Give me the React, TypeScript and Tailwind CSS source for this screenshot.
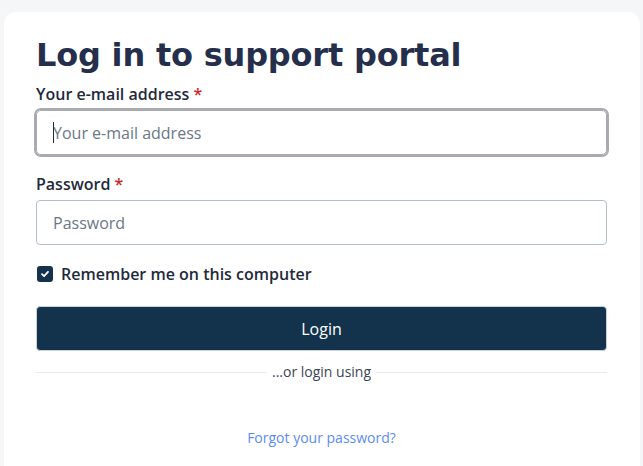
import React from "react";

export default function App() {
  return (
    <div className="min-h-[466px] w-full bg-[#f5f6f8] pt-[12px] font-['Open_Sans',sans-serif]">
      <div className="ml-[4px] w-[636px] min-h-[454px] rounded-t-[12px] bg-white pl-[32px] pr-[33px] pt-[23px]">
        <h1 className="font-['DejaVu_Sans',sans-serif] text-[32px] font-bold leading-[40px] tracking-[-0.2px] text-[#252f4c]">
          Log in to support portal
        </h1>

        <label className="mt-[7px] block text-[16px] font-semibold leading-[24px] text-[#1f2a3c]">
          Your e-mail address <span className="text-[#c62828]">*</span>
        </label>
        <div className="relative mt-[4px]">
          <input
            type="email"
            placeholder="Your e-mail address"
            className="block h-[45px] w-full rounded-[5px] border border-[#a9abb0] px-[16px] text-[16px] text-[#1f2a3c] placeholder:text-[#6b7785] outline-none ring-2 ring-[#a9abb0]"
          />
          <span className="pointer-events-none absolute left-[17px] top-[12px] h-[21px] w-px bg-[#1f2a3c]" />
        </div>

        <label className="mt-[17px] block text-[16px] font-semibold leading-[24px] text-[#1f2a3c]">
          Password <span className="text-[#c62828]">*</span>
        </label>
        <input
          type="password"
          placeholder="Password"
          className="mt-[4px] block h-[45px] w-full rounded-[4px] border border-[#b4bfca] px-[16px] text-[16px] text-[#1f2a3c] placeholder:text-[#6b7785] outline-none"
        />

        <div className="mt-[17px] flex h-[24px] items-center">
          <span className="ml-[1px] flex h-[16px] w-[16px] items-center justify-center rounded-[3px] bg-[#14324b]">
            <svg width="10" height="10" viewBox="0 0 10 10" fill="none">
              <path d="M2 5.2 L4.1 7.2 L8 2.9" stroke="white" strokeWidth="1.8" strokeLinecap="round" strokeLinejoin="round" />
            </svg>
          </span>
          <span className="ml-[8px] text-[16px] font-semibold leading-[24px] text-[#1f2a3c]">
            Remember me on this computer
          </span>
        </div>

        <button className="mt-[20px] flex h-[45px] w-full items-center justify-center rounded-[4px] border border-[#c9d2db] bg-[#13334c] text-[16px] text-white">
          Login
        </button>

        <div className="mt-[11px] flex h-[20px] items-center">
          <div className="h-px flex-1 bg-[#e8eaed]" />
          <span className="px-[5px] text-[14px] leading-[20px] text-[#3a4556]">...or login using</span>
          <div className="h-px flex-1 bg-[#e8eaed]" />
        </div>

        <div className="mt-[46px] text-center text-[14px] leading-[20px]">
          <a className="text-[#5b8def]">Forgot your password?</a>
        </div>
      </div>
    </div>
  );
}
